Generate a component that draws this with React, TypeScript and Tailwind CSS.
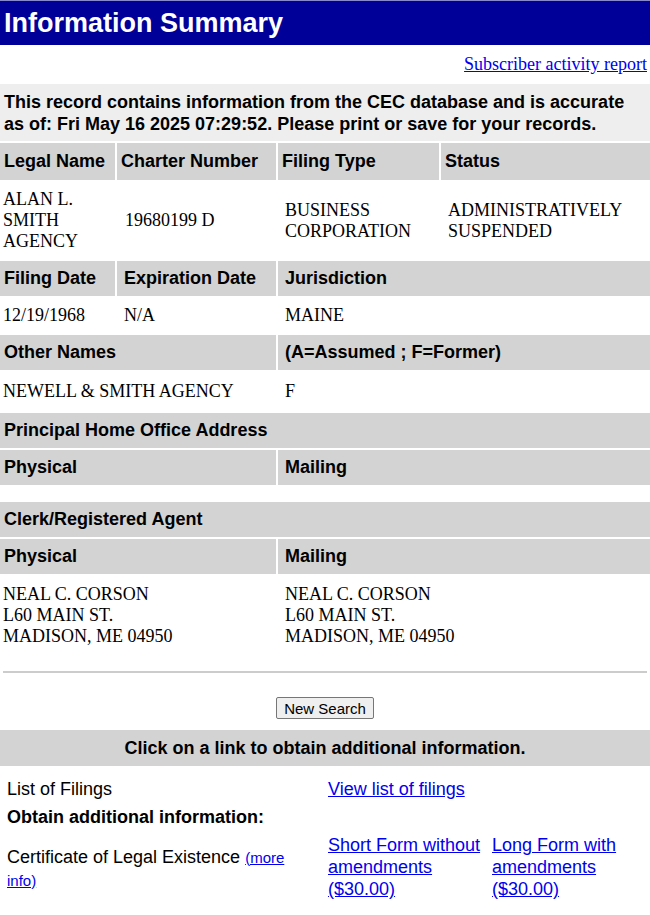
import React from "react";

const sans = "font-['Liberation_Sans',Arial,sans-serif]";
const serif = "font-['Liberation_Serif','Times_New_Roman',serif]";

function H({ children, className = "" }: { children?: React.ReactNode; className?: string }) {
  return (
    <div className={`bg-[#d3d3d3] px-[4px] py-[7px] text-[18px] leading-[21px] font-bold text-black flex items-center ${sans} ${className}`}>
      {children}
    </div>
  );
}

function D({ children, className = "" }: { children?: React.ReactNode; className?: string }) {
  return (
    <div className={`bg-white px-[3px] py-[7px] text-[18px] leading-[21px] text-black flex items-center ${serif} ${className}`}>
      {children}
    </div>
  );
}

export default function App() {
  return (
    <div className="w-[650px] bg-white min-h-[915px]">
      <div className="h-[45px] bg-[#000099] border-t border-[#8888cc] flex items-center px-[4px]">
        <h1 className={`text-white text-[27px] font-bold leading-none ${sans}`}>Information Summary</h1>
      </div>
      <div className="flex justify-end pr-[3px] pt-[8px] pb-[7px]">
        <a href="#" className={`text-[#0000ee] underline text-[18px] leading-[22px] ${serif}`}>
          Subscriber activity report
        </a>
      </div>
      <div className={`mt-[2px] bg-[#eeeeee] px-[4px] pt-[7px] pb-[6px] text-[18px] leading-[22px] font-bold text-black ${sans}`}>
        This record contains information from the CEC database and is accurate as of: Fri May 16 2025 07:29:52. Please print or save for your records.
      </div>
      <div className="grid grid-cols-[115px_159px_161px_209px] gap-[2px] pt-[2px] bg-white">
        <H className="py-[8px]">Legal Name</H>
        <H className="py-[8px]">Charter Number</H>
        <H className="py-[8px]">Filing Type</H>
        <H className="py-[8px]">Status</H>
        <D>
          ALAN L.<br />SMITH<br />AGENCY
        </D>
        <D className="px-[8px]">19680199 D</D>
        <D className="px-[7px]">
          BUSINESS<br />CORPORATION
        </D>
        <D className="px-[7px]">
          ADMINISTRATIVELY<br />SUSPENDED
        </D>
        <H>Filing Date</H>
        <H className="px-[7px]">Expiration Date</H>
        <H className="col-span-2 px-[7px]">Jurisdiction</H>
        <D>12/19/1968</D>
        <D className="px-[7px]">N/A</D>
        <D className="col-span-2 px-[7px]">MAINE</D>
        <H className="col-span-2">Other Names</H>
        <H className="col-span-2 px-[7px]">(A=Assumed ; F=Former)</H>
        <D className="col-span-2 py-[9px]">NEWELL &amp; SMITH AGENCY</D>
        <D className="col-span-2 px-[7px] py-[9px]">F</D>
        <H className="col-span-4">Principal Home Office Address</H>
        <H className="col-span-2">Physical</H>
        <H className="col-span-2 px-[7px]">Mailing</H>
        <div className="col-span-4 h-[13px] bg-white" />
        <H className="col-span-4">Clerk/Registered Agent</H>
        <H className="col-span-2">Physical</H>
        <H className="col-span-2 px-[7px]">Mailing</H>
        <D className="col-span-2 items-start pt-[8px] pb-[18px]">
          <div>
            NEAL C. CORSON<br />L60 MAIN ST.<br />MADISON, ME 04950
          </div>
        </D>
        <D className="col-span-2 items-start px-[7px] pt-[8px] pb-[18px]">
          <div>
            NEAL C. CORSON<br />L60 MAIN ST.<br />MADISON, ME 04950
          </div>
        </D>
      </div>
      <div className="mx-[3px] mt-[6px] border-t-2 border-[#cccccc]" />
      <div className="flex justify-center pt-[24px] pb-[11px]">
        <button className={`h-[22px] px-[7px] bg-[#efefef] border border-[#767676] rounded-[2px] text-[15px] leading-none text-black ${sans}`}>
          New Search
        </button>
      </div>
      <div className={`bg-[#d3d3d3] h-[36px] flex items-center justify-center text-[18px] font-bold text-black ${sans}`}>
        Click on a link to obtain additional information.
      </div>
      <div className={`grid grid-cols-[324px_164px_1fr] pt-[9px] text-[18px] leading-[22px] text-black ${sans}`}>
        <div className="pl-[7px] pr-[4px] py-[3px]">List of Filings</div>
        <div className="px-[4px] py-[3px] col-span-2">
          <a href="#" className="text-[#0000ee] underline">View list of filings</a>
        </div>
        <div className="pl-[7px] py-[3px] col-span-3 font-bold">Obtain additional information:</div>
        <div className="pl-[7px] pr-[28px] pt-[6px] pb-[3px] flex items-center">
          <div>
            Certificate of Legal Existence{" "}
            <a href="#" className="text-[#0000ee] underline text-[15px]">(more info)</a>
          </div>
        </div>
        <div className="pl-[4px] pr-[2px] py-[3px]">
          <a href="#" className="text-[#0000ee] underline">Short Form without amendments ($30.00)</a>
        </div>
        <div className="px-[4px] py-[3px]">
          <a href="#" className="text-[#0000ee] underline">Long Form with amendments ($30.00)</a>
        </div>
      </div>
    </div>
  );
}
